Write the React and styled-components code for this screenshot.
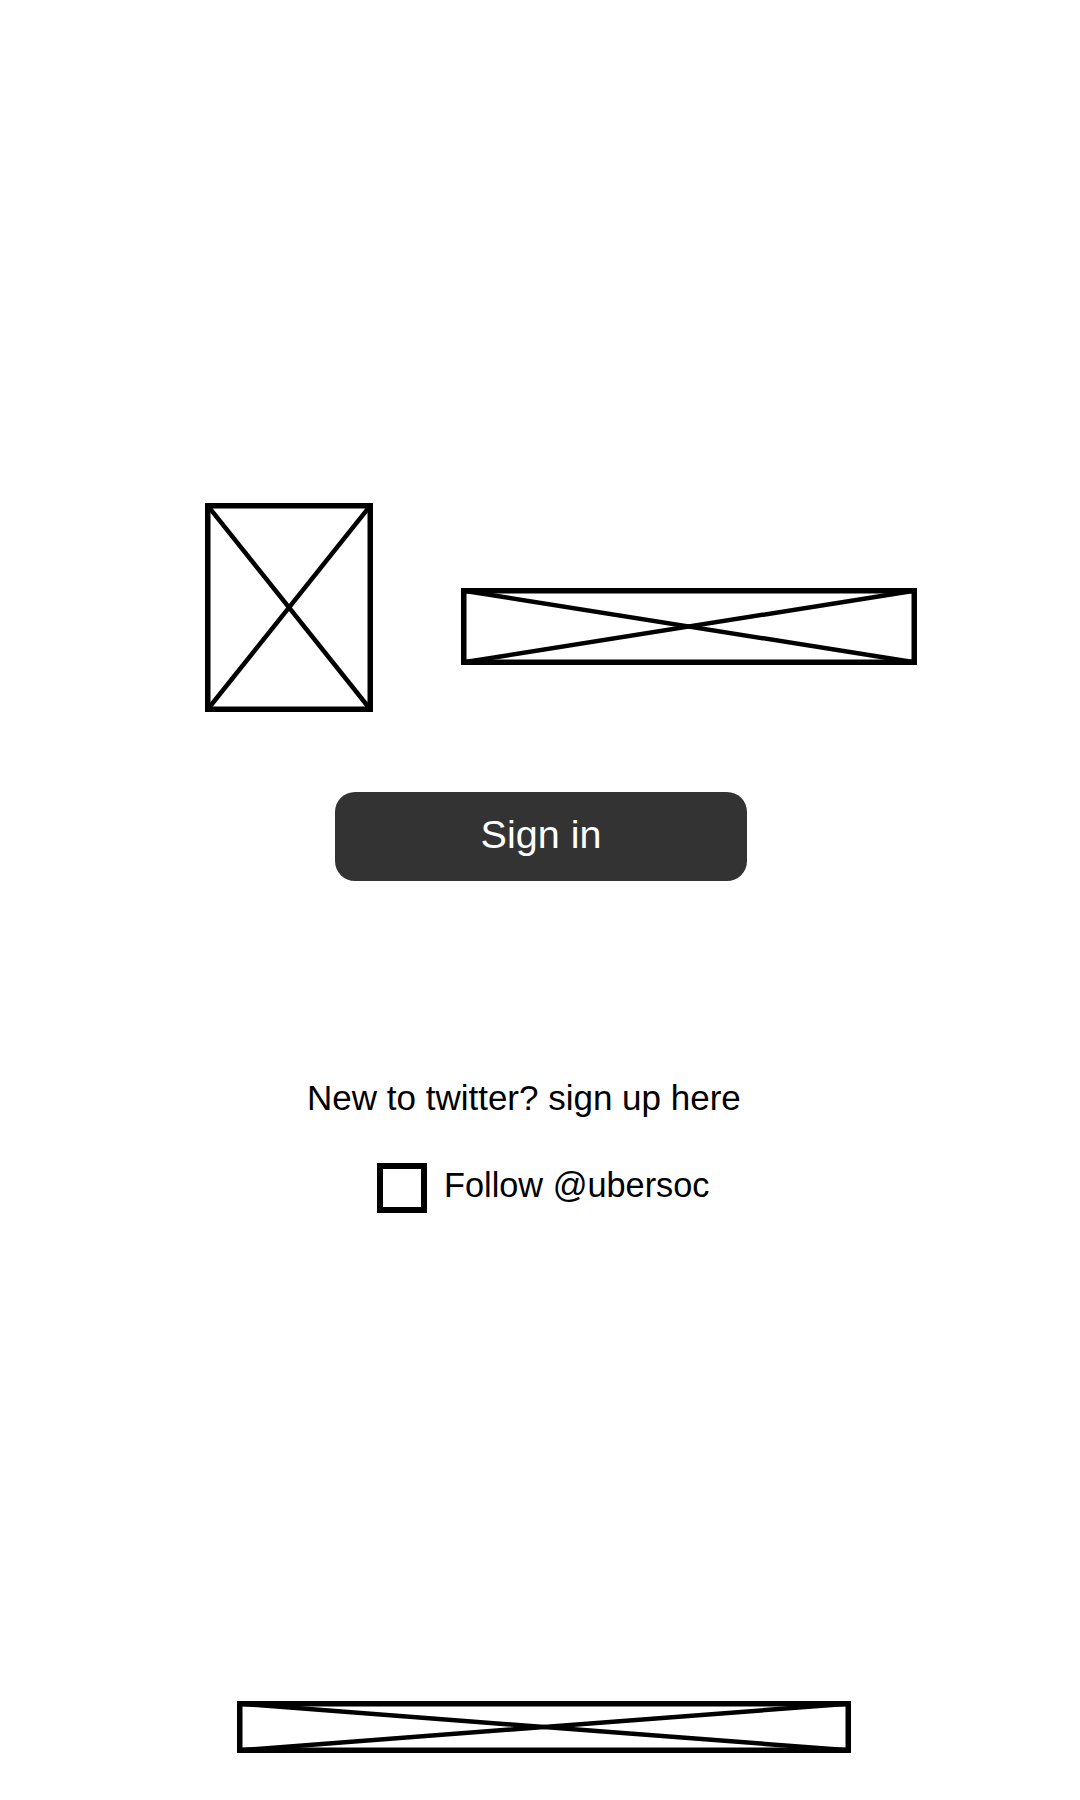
import React from "react";
import styled, { createGlobalStyle } from "styled-components";

const GlobalStyle = createGlobalStyle`
  html, body {
    margin: 0;
    padding: 0;
    background: #ffffff;
  }
  body {
    font-family: "Liberation Sans", Arial, sans-serif;
    color: #000000;
  }
`;

const Page = styled.main`
  width: 1080px;
  height: 1800px;
  box-sizing: border-box;
  padding-top: 503px;
  display: flex;
  flex-direction: column;
  align-items: flex-start;
  background: #ffffff;
`;

const Row = styled.div`
  display: flex;
  align-items: flex-start;
  gap: ${(p) => p.$gap || 0}px;
  margin-left: ${(p) => p.$indent || 0}px;
  margin-top: ${(p) => p.$top || 0}px;
`;

const PlaceholderFrame = styled.div`
  width: ${(p) => p.$w}px;
  height: ${(p) => p.$h}px;
  margin-top: ${(p) => p.$top || 0}px;
  flex: none;
  display: block;
  svg {
    display: block;
  }
`;

function Placeholder({ w, h, top }) {
  const s = 5.5;
  const i = s / 2;
  return (
    <PlaceholderFrame $w={w} $h={h} $top={top}>
      <svg width={w} height={h} viewBox={`0 0 ${w} ${h}`}>
        <line x1={i} y1={i} x2={w - i} y2={h - i} stroke="#000" strokeWidth="4.5" />
        <line x1={i} y1={h - i} x2={w - i} y2={i} stroke="#000" strokeWidth="4.5" />
        <rect x={i} y={i} width={w - s} height={h - s} fill="none" stroke="#000" strokeWidth={s} />
      </svg>
    </PlaceholderFrame>
  );
}

const SignInButton = styled.button`
  margin-left: 335px;
  margin-top: 80px;
  width: 412px;
  height: 89px;
  border: none;
  border-radius: 20px;
  background: #333333;
  color: #ffffff;
  font-family: "Liberation Sans", Arial, sans-serif;
  font-size: 39.5px;
  display: flex;
  align-items: center;
  justify-content: center;
  padding: 0 0 4px 0;
  box-sizing: border-box;
  cursor: pointer;
`;

const SignUpText = styled.p`
  margin: 197px 0 0 307px;
  font-size: 35px;
  line-height: 40px;
  color: #000000;
`;

const CheckBox = styled.span`
  display: block;
  width: 50px;
  height: 50px;
  box-sizing: border-box;
  border: 6px solid #000000;
  flex: none;
`;

const CheckLabel = styled.span`
  font-size: 34.3px;
  line-height: 40px;
  margin-top: 2px;
  margin-left: 2px;
  color: #000000;
`;

export default function App() {
  return (
    <>
      <GlobalStyle />
      <Page>
        <Row $indent={205} $gap={88}>
          <Placeholder w={168} h={209} />
          <Placeholder w={456} h={77} top={85} />
        </Row>
        <SignInButton>Sign in</SignInButton>
        <SignUpText>New to twitter? sign up here</SignUpText>
        <Row $indent={377} $gap={15} $top={45}>
          <CheckBox />
          <CheckLabel>Follow @ubersoc</CheckLabel>
        </Row>
        <Row $indent={237} $top={488}>
          <Placeholder w={614} h={52} />
        </Row>
      </Page>
    </>
  );
}
